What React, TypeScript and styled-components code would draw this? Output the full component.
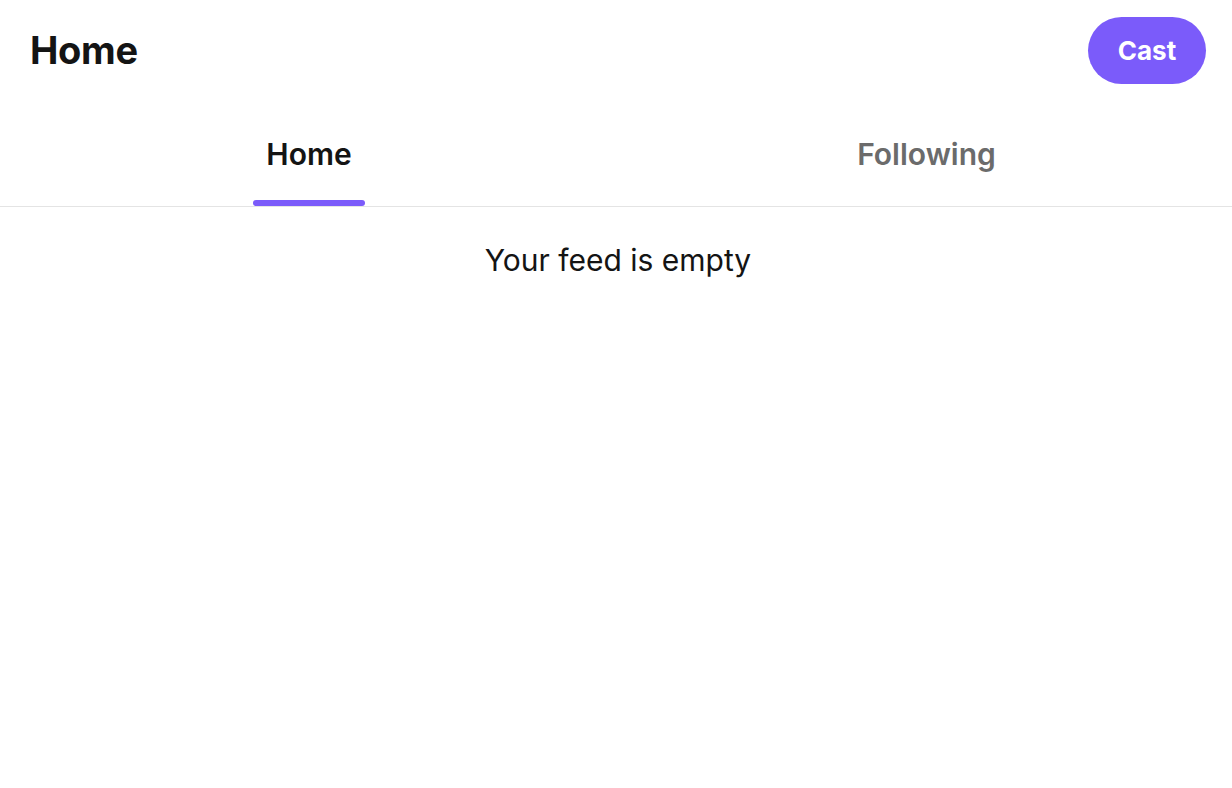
import React, { FC, useState } from "react";
import styled, { createGlobalStyle } from "styled-components";

const GlobalStyle = createGlobalStyle`
  html, body {
    margin: 0;
    padding: 0;
    background: #ffffff;
  }
  body {
    font-family: Inter, "Noto Sans", sans-serif;
    color: #141414;
  }
  * {
    box-sizing: border-box;
  }
`;

const Page = styled.div`
  display: flex;
  flex-direction: column;
  min-height: 100vh;
  width: 100%;
  background: #fff;
`;

const TopBar = styled.header`
  display: flex;
  align-items: center;
  justify-content: space-between;
  height: 100px;
  padding: 0 26px 0 30px;
`;

const Title = styled.h1`
  margin: 0;
  font-size: 38px;
  font-weight: 700;
  letter-spacing: -0.3px;
  color: #141414;
`;

const CastButton = styled.button`
  height: 67px;
  width: 118px;
  border: none;
  border-radius: 34px;
  background: #7b5bfa;
  color: #fff;
  font-family: inherit;
  font-size: 26px;
  font-weight: 700;
  cursor: pointer;
`;

const Tabs = styled.nav`
  display: grid;
  grid-template-columns: 1fr 1fr;
  border-bottom: 1px solid #e4e4e4;
`;

const Tab = styled.button<{ $active?: boolean }>`
  display: flex;
  flex-direction: column;
  align-items: center;
  justify-content: flex-end;
  height: 106px;
  padding: 0;
  border: none;
  background: none;
  font-family: inherit;
  font-size: 30px;
  font-weight: 600;
  color: ${(p) => (p.$active ? "#141414" : "#6b6b6b")};
  cursor: pointer;
`;

const TabLabel = styled.span<{ $shift: number }>`
  line-height: 36px;
  margin-bottom: 28px;
  padding-left: ${(p) => p.$shift}px;
`;

const Indicator = styled.span<{ $show?: boolean }>`
  width: 112px;
  height: 6px;
  border-radius: 3px;
  margin-left: 2px;
  background: ${(p) => (p.$show ? "#7b5bfa" : "transparent")};
`;

const Empty = styled.p`
  margin: 0;
  padding: 35px 0 0 4px;
  text-align: center;
  font-size: 30px;
  font-weight: 400;
  line-height: 36px;
  color: #141414;
`;

const tabs = [
  { label: "Home", shift: 2 },
  { label: "Following", shift: 5 },
];

const App: FC = () => {
  const [active, setActive] = useState(0);
  return (
    <Page>
      <GlobalStyle />
      <TopBar>
        <Title>Home</Title>
        <CastButton>Cast</CastButton>
      </TopBar>
      <Tabs>
        {tabs.map((t, i) => (
          <Tab key={t.label} $active={i === active} onClick={() => setActive(i)}>
            <TabLabel $shift={t.shift}>{t.label}</TabLabel>
            <Indicator $show={i === active} />
          </Tab>
        ))}
      </Tabs>
      <Empty>Your feed is empty</Empty>
    </Page>
  );
};

export default App;
